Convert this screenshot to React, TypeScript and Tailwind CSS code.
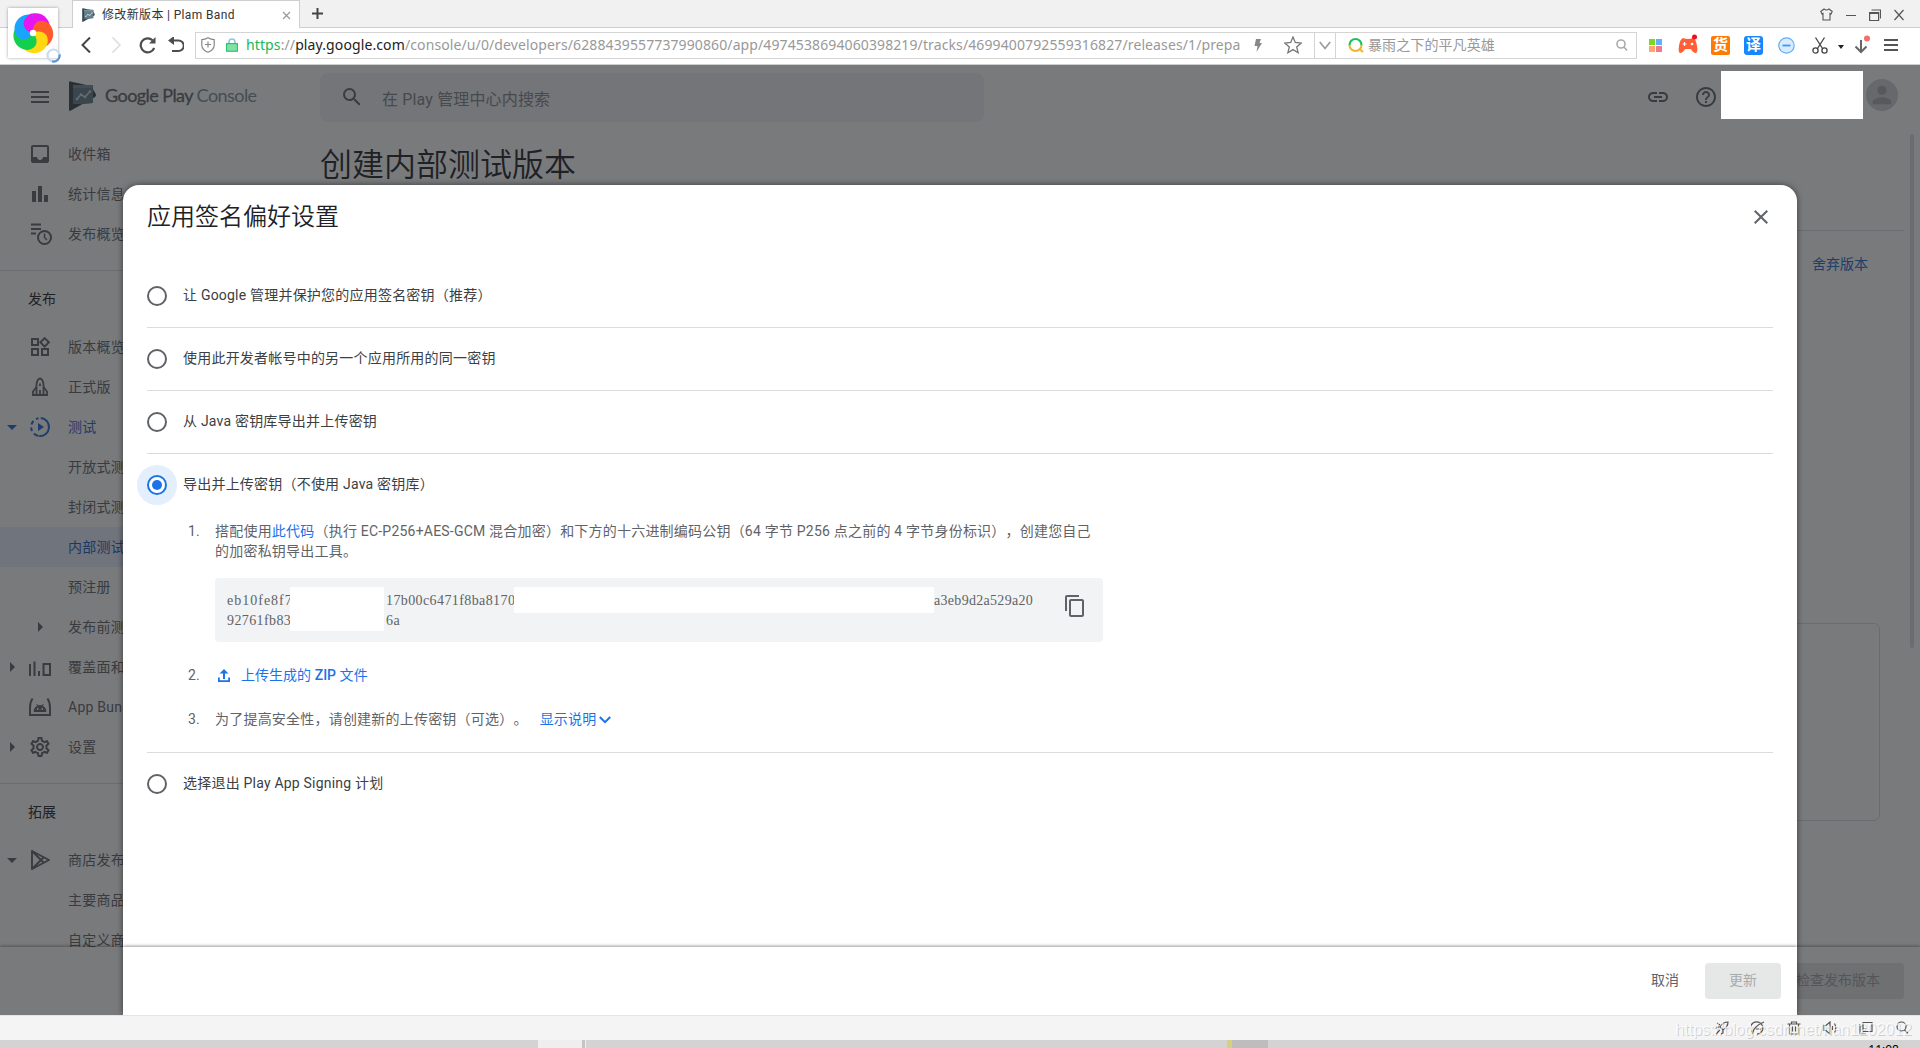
import type { ReactNode } from "react";
import {
  MdMenu,
  MdSearch,
  MdLink,
  MdHelpOutline,
  MdClose,
  MdContentCopy,
  MdArrowDropDown,
  MdArrowRight,
  MdOutlineSettings,
  MdBarChart,
  MdOutlineWidgets,
  MdPerson,
  MdInbox,
} from "react-icons/md";

/* ---------- drawings ---------- */

const petals = ["#e815f0", "#ff5a2a", "#ffd813", "#12cf4e", "#1aa4ff"];

function PinwheelLogo() {
  return (
    <svg className="size-[42px]" viewBox="-21 -21 42 42">
      {petals.map((color, i) => (
        <path
          key={color}
          transform={`rotate(${i * 72})`}
          fill={color}
          d="M0 0C-7-1-12-8-8-14C-4-21 8-22 14-14C17-10 17-7 16-5C13-12 4-12 0 0Z"
        />
      ))}
      <path d="M0 0C-7-1-12-8-8-14C-6-17-4-19-1-19.500L0 0Z" fill={petals[0]} />
      <circle r="3.200" fill="#fff" />
    </svg>
  );
}

function ConsoleMark({ className }: { className: string }) {
  return (
    <svg className={className} viewBox="0 0 27 30">
      <path d="M0 1.500Q0 0 1.500.4L22 5 27 13.500Q27.300 15 26 16L2 29.600Q0 30.500 0 28.500Z" fill="#37474f" />
      <path d="M4 4h20v18l-8 1H4z" fill="#607d8b" />
      <path d="M4 4h20v3H4z" fill="#78909c" />
      <path d="M8 18l4-4.500 4 2.500 5-5.500" fill="none" stroke="#cfd8dc" strokeWidth="1.600" />
      <circle cx="8" cy="18" r="1.300" fill="#cfd8dc" />
      <circle cx="12" cy="13.500" r="1.300" fill="#cfd8dc" />
      <circle cx="16" cy="16" r="1.300" fill="#cfd8dc" />
      <circle cx="21" cy="10.500" r="1.300" fill="#cfd8dc" />
    </svg>
  );
}

type StrokeProps = { className: string; box?: string; width?: number; children: ReactNode };

function Stroke({ className, box = "0 0 24 24", width = 2, children }: StrokeProps) {
  return (
    <svg className={className} viewBox={box} fill="none" stroke="currentColor" strokeWidth={width}>
      {children}
    </svg>
  );
}

const OverviewIcon = () => (
  <Stroke className="size-6">
    <path d="M3 2.500h10M3 7h10M3 11.500h5" />
    <circle cx="16.500" cy="15.500" r="6.500" />
    <path d="M16.500 11.500v4l2.500 2.500" strokeWidth="1.500" />
  </Stroke>
);

const RocketIcon = () => (
  <Stroke className="size-6" width={1.8}>
    <path d="M8.500 20V9.500C8.500 6 10.500 3.500 12 3.500S15.500 6 15.500 9.500V20" />
    <path d="M8.500 12L5 16.500V20H19V16.500L15.500 12" />
    <path d="M12 8.500v2.500M12 15v5" />
  </Stroke>
);

const TestIcon = () => (
  <Stroke className="size-6">
    <path d="M12 3a9 9 0 0 1 0 18" transform="rotate(5 12 12)" />
    <path d="M10.500 21a9 9 0 0 1-4.500-2.500M4 16a9 9 0 0 1-.8-3.500M3.500 9.500A9 9 0 0 1 5.500 6M8 4.200A9 9 0 0 1 10.500 3.200" />
    <path d="M10 8l6 4-6 4z" fill="currentColor" stroke="none" />
  </Stroke>
);

const ReachIcon = () => (
  <Stroke className="size-6">
    <path d="M2 9v12M6.500 6.500V21M11 16v5M15.500 9h6.500v11h-6.500z" />
  </Stroke>
);

const BundleIcon = () => (
  <Stroke className="size-6">
    <path d="M4.500 3.500C2 7 2 10 2 13v7h20v-7c0-3 0-6-2.500-9.500" />
    <path
      d="M6 16.500a6 6 0 0 1 12 0zM8.500 9l1.500 2M15.500 9L14 11"
      fill="currentColor"
      strokeWidth="1"
    />
    <circle cx="9.800" cy="14" r=".9" fill="#fff" stroke="none" />
    <circle cx="14.200" cy="14" r=".9" fill="#fff" stroke="none" />
  </Stroke>
);

const StoreIcon = () => (
  <Stroke className="size-6" width={1.9}>
    <path d="M4 3L21 12 4 21z" strokeLinejoin="round" />
    <path d="M4 3L16 15M4 21L16 9" />
  </Stroke>
);

/* ---------- browser frame ---------- */

function TabStrip() {
  return (
    <div className="flex h-7 items-end border-b border-[#cfcfcf] bg-[#f1f1f1]">
      <div className="mb-[-1px] ml-[72px] flex h-7 w-[228px] items-center border border-b-0 border-[#cfcfcf] bg-white pr-2 pl-[9px]">
        <ConsoleMark className="h-[14px] w-[13px]" />
        <span className="ml-[7px] grow text-[12px] leading-4 tracking-[0.35px] whitespace-nowrap text-[#333]">
          修改新版本 | Plam Band
        </span>
        <Stroke className="mt-[2px] size-[9px] text-[#999]" box="0 0 9 9" width={1.2}>
          <path d="M1 1l7 7M8 1L1 8" />
        </Stroke>
      </div>
      <Stroke className="mb-2 ml-[12px] size-[11px] text-[#444]" box="0 0 11 11" width={2}>
        <path d="M5.500 0v11M0 5.500h11" />
      </Stroke>
      <div className="mb-[6px] ml-auto flex items-center gap-[12px] pr-[15px] text-[#555]">
        <Stroke className="size-[13px]" box="0 0 13 13" width={1.1}>
          <path d="M4 1L.8 3.500 2 6l1-.5V12h7V5.500l1 .5 1.200-2.500L9 1Q6.500 3 4 1z" />
        </Stroke>
        <Stroke className="size-[12px]" box="0 0 12 12" width={1}>
          <path d="M1 6.500h10" />
        </Stroke>
        <Stroke className="size-[12px]" box="0 0 12 12" width={1.2}>
          <path d="M.6 3.500h9v8h-9zM.6 4.500h9M2.500 1h9v8.500" />
        </Stroke>
        <Stroke className="size-[12px]" box="0 0 12 12" width={1.2}>
          <path d="M1.500 1l9 10M10.500 1l-9 10" />
        </Stroke>
      </div>
    </div>
  );
}

function Cell({ className, children }: { className: string; children: ReactNode }) {
  return <div className={`flex shrink-0 items-center justify-center ${className}`}>{children}</div>;
}

function AddressRow() {
  return (
    <div className="flex h-[37px] items-center border-b border-[#cfcfcf] bg-white pb-[2px] pl-[71px]">
      <Cell className="w-[30px] text-[#444]">
        <Stroke className="size-4" box="0 0 16 16" width={2}>
          <path d="M12 .5L4.500 8l7.500 7.500" />
        </Stroke>
      </Cell>
      <Cell className="w-[30px] text-[#ddd]">
        <Stroke className="size-4" box="0 0 16 16" width={1.6}>
          <path d="M4.500 .5L12 8l-7.500 7.500" />
        </Stroke>
      </Cell>
      <Cell className="w-[32px] text-[#4d4d4d]">
        <Stroke className="size-[17px]" box="0 0 17 17" width={2.2}>
          <path d="M13.500 3.200A7 7 0 1 0 15.200 11" />
          <path d="M16.500 0v6.500H10z" fill="currentColor" stroke="none" />
        </Stroke>
      </Cell>
      <Cell className="w-[26px] text-[#4d4d4d]">
        <Stroke className="size-4" box="0 0 16 16" width={2}>
          <path d="M2 3.500h8.500a4.800 4.800 0 0 1 0 10.500H4" />
          <path d="M0 3.500L6 -1v9z" fill="currentColor" stroke="none" />
        </Stroke>
      </Cell>
      <div className="ml-[6px] flex h-[27px] w-[1442px] items-center border border-[#d4d4d4]">
        <Cell className="ml-px w-[22px] text-[#888]">
          <Stroke className="h-4 w-[14px]" box="0 0 14 16" width={1.2}>
            <path d="M7 .8Q4 2.600.8 2.700V8Q1 13 7 15.200 13 13 13.200 8V2.700Q10 2.600 7 .8zM7 4.500v6M4 7.500h6" />
          </Stroke>
        </Cell>
        <Cell className="w-[25px]">
          <svg className="h-[14px] w-3" viewBox="0 0 12 14">
            <path d="M3 6V4a3 3 0 0 1 6 0v2" fill="none" stroke="#8fc7dd" strokeWidth="1.600" />
            <rect x=".6" y="5.600" width="10.800" height="7.600" fill="#7fe3a4" stroke="#2cc56b" strokeWidth="1.200" />
          </svg>
        </Cell>
        <div className="ml-[2px] w-[997px] overflow-hidden font-['Noto_Sans'] text-[14px] leading-6 tracking-[0.11px] whitespace-nowrap text-[#999]">
          <span className="text-[#12b955]">https</span>://<span className="text-[#222]">play.google.com</span>
          <span>
            /console/u/0/developers/6288439557737990860/app/4974538694060398219/tracks/4699400792559316827/releases/1/prepa
          </span>
        </div>
        <Cell className="w-[30px]">
          <svg className="h-[13px] w-2" viewBox="0 0 8 13">
            <path d="M2 0h5L5.500 4H8L2.500 13 3.500 7H.5z" fill="#888" />
          </svg>
        </Cell>
        <Cell className="w-[40px] text-[#777]">
          <Stroke className="size-[18px]" box="0 0 18 18" width={1.3}>
            <path d="M9 1l2.300 5.500 5.900.5-4.500 3.900 1.400 5.800L9 13.600l-5.100 3.100 1.400-5.800L.8 7l5.900-.5z" />
          </Stroke>
        </Cell>
        <Cell className="ml-px h-full w-[22px] border-x border-[#d4d4d4] text-[#999]">
          <Stroke className="h-[9px] w-3" box="0 0 12 9" width={1.6}>
            <path d="M.8 1L6 7.500 11.200 1" />
          </Stroke>
        </Cell>
        <Cell className="ml-[11px] w-[18px]">
          <svg className="size-4" viewBox="0 0 16 16" fill="none" strokeWidth="2.200">
            <path d="M1.500 8a6 6 0 0 1 12 0" stroke="#1fbf5c" />
            <path d="M1.500 8a6 6 0 0 0 12 0" stroke="#f4b52c" />
            <path d="M12 12.500l3 2.500" stroke="#f4b52c" />
          </svg>
        </Cell>
        <span className="ml-[3px] grow text-[14px] leading-5 tracking-[0.1px] text-[#999]">暴雨之下的平凡英雄</span>
        <Cell className="w-[28px] text-[#aaa]">
          <Stroke className="size-3" box="0 0 12 12" width={1.6}>
            <circle cx="5" cy="5" r="4" />
            <path d="M8 8l3 3.500" />
          </Stroke>
        </Cell>
      </div>
      <Cell className="ml-px w-[34px]">
        <svg className="size-[13px]" viewBox="0 0 13 13">
          <path d="M0 0h6v6H0z" fill="#7bd81e" />
          <path d="M7 0h6v6H7z" fill="#5db1ff" />
          <path d="M0 7h6v6H0z" fill="#ffa66e" />
          <path d="M7 7h6v6H7z" fill="#f27988" />
        </svg>
      </Cell>
      <Cell className="w-[32px]">
        <svg className="h-[22px] w-[20px]" viewBox="0 0 20 22">
          <path d="M5 4Q10 6 15 4 18 5 19 12 20 18 18 19 15 19 13 15H7Q5 19 2 19 0 18 1 12 2 5 5 4z" fill="#ff5e36" />
          <path d="M4.500 10h4M6.500 8v4" stroke="#fff" strokeWidth="1.200" />
          <circle cx="14" cy="10" r="1.300" fill="#fff" />
          <circle cx="16.500" cy="3" r="2.500" fill="#f0101c" />
        </svg>
      </Cell>
      <Cell className="w-[33px]">
        <span className="flex size-[19px] items-center justify-center rounded-[2px] bg-[#ff7a05] text-[15px] leading-none font-bold text-white">
          货
        </span>
      </Cell>
      <Cell className="w-[33px]">
        <span className="flex size-[19px] items-center justify-center rounded-[3px] bg-[#1787fb] text-[15px] leading-none font-bold text-white">
          译
        </span>
      </Cell>
      <Cell className="w-[33px]">
        <svg className="size-[17px]" viewBox="0 0 17 17">
          <circle cx="8.500" cy="8.500" r="7.700" fill="#d8ecff" stroke="#62aff8" strokeWidth="1.200" />
          <path d="M4.500 8.500h8" stroke="#4196f0" strokeWidth="1.800" />
        </svg>
      </Cell>
      <Cell className="w-[33px] text-[#444]">
        <Stroke className="h-[17px] w-4" box="0 0 16 17" width={1.3}>
          <path d="M3.500.5l7 11M12.500.5l-7 11" />
          <circle cx="3.500" cy="13.500" r="2.600" />
          <circle cx="12.500" cy="13.500" r="2.600" />
        </Stroke>
      </Cell>
      <Cell className="w-[9px]">
        <svg className="mt-1 h-[4px] w-[6px]" viewBox="0 0 6 4">
          <path d="M0 0h6L3 4z" fill="#222" />
        </svg>
      </Cell>
      <Cell className="w-[33px]">
        <svg className="h-5 w-4" viewBox="0 0 16 20" fill="none">
          <path d="M7 5v12M1.500 11.500L7 17l5.500-5.500" stroke="#666" strokeWidth="2" />
          <circle cx="13" cy="3.500" r="3" fill="#f2706c" />
        </svg>
      </Cell>
      <Cell className="w-[26px] text-[#555]">
        <Stroke className="size-[14px]" box="0 0 14 14" width={2}>
          <path d="M0 2h14M0 7h14M0 12h14" />
        </Stroke>
      </Cell>
    </div>
  );
}

function HomeButton() {
  return (
    <div className="absolute top-2 left-2 z-10 flex size-[50px] items-center justify-center bg-white shadow-[0_0_3px_rgba(0,0,0,0.35)]">
      <PinwheelLogo />
      <svg className="absolute -right-[3px] -bottom-[5px] size-[15px]" viewBox="0 0 15 15" fill="none" strokeWidth="2.200">
        <circle cx="7.500" cy="7.500" r="6" stroke="#c9dcf2" />
        <path d="M13.500 6.500A6 6 0 0 1 6 13.300" stroke="#5b93da" />
      </svg>
    </div>
  );
}

/* ---------- console page ---------- */

type NavItem = {
  label: string;
  icon?: ReactNode;
  caret?: "down" | "right" | "inner";
  tone?: "active" | "open";
};

const navGroups: { title?: string; items: NavItem[] }[] = [
  {
    items: [
      { label: "收件箱", icon: <MdInbox className="size-6" /> },
      { label: "统计信息", icon: <MdBarChart className="size-6" /> },
      { label: "发布概览", icon: <OverviewIcon /> },
    ],
  },
  {
    title: "发布",
    items: [
      { label: "版本概览", icon: <MdOutlineWidgets className="size-6" /> },
      { label: "正式版", icon: <RocketIcon /> },
      { label: "测试", icon: <TestIcon />, caret: "down", tone: "open" },
      { label: "开放式测试" },
      { label: "封闭式测试" },
      { label: "内部测试", tone: "active" },
      { label: "预注册" },
      { label: "发布前测试报告", caret: "inner" },
      { label: "覆盖面和设备", icon: <ReachIcon />, caret: "right" },
      { label: "App Bundle 探索器", icon: <BundleIcon /> },
      { label: "设置", icon: <MdOutlineSettings className="size-6" />, caret: "right" },
    ],
  },
  {
    title: "拓展",
    items: [
      { label: "商店发布", icon: <StoreIcon />, caret: "down" },
      { label: "主要商品详情" },
      { label: "自定义商品详情" },
    ],
  },
];

function NavRow({ label, icon, caret, tone }: NavItem) {
  const color =
    tone === "active"
      ? "bg-[#e8f0fe] text-[#185abc]"
      : tone === "open"
        ? "text-[#1967d2]"
        : "text-[#5f6368]";
  return (
    <div className={`flex h-10 items-center text-[14px] leading-5 ${color}`}>
      <span className="flex w-6 shrink-0 justify-center">
        {caret === "down" && <MdArrowDropDown className="size-6 shrink-0" />}
        {caret === "right" && <MdArrowRight className="size-6 shrink-0" />}
      </span>
      <span className="ml-1 flex w-6 shrink-0 justify-center">
        {caret === "inner" ? <MdArrowRight className="size-6" /> : icon}
      </span>
      <span className="ml-4 tracking-[0.25px] whitespace-nowrap">{label}</span>
    </div>
  );
}

function Sidebar() {
  return (
    <nav className="w-[256px] shrink-0 overflow-hidden pt-[6px]">
      {navGroups.map((group, i) => (
        <div key={i} className={i > 0 ? "mt-4 border-t border-[#dadce0] pt-2" : ""}>
          {group.title && (
            <div className="mb-2 flex h-10 items-center pl-7 text-[14px] text-[#202124]">{group.title}</div>
          )}
          {group.items.map((item) => (
            <NavRow key={item.label} {...item} />
          ))}
        </div>
      ))}
    </nav>
  );
}

function TopBar() {
  return (
    <header className="flex h-16 items-center text-[#5f6368]">
      <MdMenu className="ml-7 size-6 shrink-0" />
      <div className="mb-px ml-[17px] flex w-[251px] items-center">
        <ConsoleMark className="h-[30px] w-[27px]" />
        <span className="mb-[2px] ml-[9px] font-['Lato'] text-[18px] leading-6 tracking-[-0.56px] whitespace-nowrap">
          <span className="text-[#5f6368] [-webkit-text-stroke:0.3px]">Google Play</span>
          <span className="text-[#78909c]"> Console</span>
        </span>
      </div>
      <div className="mt-px flex h-[49px] w-[664px] items-center rounded-lg bg-[#f1f3f4]">
        <MdSearch className="mb-px ml-5 size-6" />
        <span className="mt-[6px] ml-[18px] text-[16px] leading-6 tracking-[0.15px] text-[#80868b]">
          在 Play 管理中心内搜索
        </span>
      </div>
      <MdLink className="ml-[662px] size-6" />
      <MdHelpOutline className="ml-6 size-6" />
      <div className="mb-1 ml-[148px] flex size-8 items-center justify-center rounded-full bg-[#d0d2d6]">
        <MdPerson className="size-7 text-[#a9adb2]" />
      </div>
    </header>
  );
}

function ReleasePage() {
  return (
    <div className="flex h-full flex-col bg-white">
      <TopBar />
      <div className="flex min-h-0 grow overflow-hidden">
        <Sidebar />
        <main className="flex grow flex-col pr-4 pl-16">
          <h1 className="pt-[17px] text-[32px] leading-10 font-[350] text-[#202124]">创建内部测试版本</h1>
          <div className="mt-[45px] border-t border-[#dadce0]" />
          <a className="mt-[23px] mr-9 self-end text-[14px] leading-5 text-[#1967d2]">舍弃版本</a>
          <div className="mt-[349px] mr-6 h-[198px] shrink-0 rounded-md border border-[#dadce0]" />
        </main>
        <div className="mt-[6px] mr-[6px] ml-[-10px] h-[514px] w-1 rounded-full bg-[#dadce0]" />
      </div>
      <footer className="flex h-[68px] shrink-0 items-center justify-end bg-white pr-4 shadow-[0_-1px_3px_rgba(0,0,0,0.4)]">
        <span className="flex h-9 items-center rounded bg-[#e4e6e7] px-6 pb-px text-[14px] text-[#a0a4a8]">
          检查发布版本
        </span>
      </footer>
    </div>
  );
}

/* ---------- signing dialog ---------- */

function OptionRow({ label, selected }: { label: string; selected?: boolean }) {
  return (
    <div className="box-content flex h-[62px] items-center">
      {selected ? (
        <span className="-m-[10px] flex size-10 shrink-0 items-center justify-center rounded-full bg-[#e3effc]">
          <span className="flex size-5 items-center justify-center rounded-full border-2 border-[#1a73e8] bg-white">
            <span className="size-[10px] rounded-full bg-[#1a73e8]" />
          </span>
        </span>
      ) : (
        <span className="size-5 shrink-0 rounded-full border-2 border-[#5f6368]" />
      )}
      <span className="relative mb-[2px] ml-4 text-[14px] leading-5 tracking-[0.21px] text-[#3c4043]">{label}</span>
    </div>
  );
}

function KeyBlock() {
  return (
    <div className="relative mt-[17px] h-16 w-[888px] rounded bg-[#f1f3f4] pt-[13px] pl-3 font-['Liberation_Serif'] text-[14px] leading-5 text-[#5f6368]">
      <div className="flex">
        <span className="w-[159px] tracking-[1px]">eb10fe8f7</span>
        <span className="w-[548px] tracking-[0.4px]">17b00c6471f8ba8170</span>
        <span className="tracking-[0.3px]">a3eb9d2a529a20</span>
      </div>
      <div className="flex">
        <span className="w-[159px] tracking-[0.4px]">92761fb83</span>
        <span className="tracking-[0.4px]">6a</span>
      </div>
      <div className="absolute top-[9px] left-[75px] h-11 w-[94px] bg-white" />
      <div className="absolute top-[9px] left-[299px] h-[26px] w-[420px] bg-white" />
      <MdContentCopy className="absolute top-4 right-4 size-6 text-[#5f6368]" />
    </div>
  );
}

function UploadSteps() {
  return (
    <div className="flex h-[236px] flex-col pl-[41px] text-[14px] leading-5 tracking-[0.21px] text-[#5f6368] [text-spacing-trim:space-all]">
      <div className="mt-[5px] flex">
        <span className="w-[27px] shrink-0">1.</span>
        <div className="w-[888px]">
          <p className="whitespace-nowrap">
            搭配使用<span className="text-[#1a73e8]">此代码</span>（执行 EC-P256+AES-GCM
            混合加密）和下方的十六进制编码公钥（64 字节 P256 点之前的 4 字节身份标识），创建您自己
            <br />
            的加密私钥导出工具。
          </p>
          <KeyBlock />
        </div>
      </div>
      <div className="mt-[23px] flex items-center">
        <span className="w-[27px]">2.</span>
        <svg className="size-[18px] text-[#1a73e8]" viewBox="0 0 18 18" fill="currentColor">
          <path d="M9 3l4.500 4.500H10V13H8V7.500H4.500z" />
          <path d="M3 11.500h1.800V14.200h8.400v-2.700H15V16H3z" />
        </svg>
        <span className="ml-2 tracking-[0.03px] text-[#1a73e8]">
          上传生成的 <span className="font-medium">ZIP</span> 文件
        </span>
      </div>
      <div className="mt-6 flex items-center">
        <span className="w-[27px]">3.</span>
        <span>为了提高安全性，请创建新的上传密钥（可选）。</span>
        <span className="ml-3 text-[#1a73e8]">显示说明</span>
        <Stroke className="mt-[2px] ml-[3px] h-2 w-3 text-[#1a73e8]" box="0 0 12 8" width={2}>
          <path d="M.8 1L6 6.200 11.200 1" />
        </Stroke>
      </div>
    </div>
  );
}

function SigningDialog() {
  return (
    <div className="flex h-[830px] w-[1674px] flex-col overflow-hidden rounded-t-2xl bg-white shadow-[0_0_6px_rgba(0,0,0,0.5)]">
      <div className="flex h-16 items-center justify-between pr-6 pl-6">
        <h2 className="text-[24px] leading-8 font-[350] text-[#202124]">应用签名偏好设置</h2>
        <MdClose className="size-6 text-[#5f6368]" />
      </div>
      <div className="mx-6 mt-4 flex grow flex-col divide-y divide-[#dadce0]">
        <OptionRow label="让 Google 管理并保护您的应用签名密钥（推荐）" />
        <OptionRow label="使用此开发者帐号中的另一个应用所用的同一密钥" />
        <OptionRow label="从 Java 密钥库导出并上传密钥" />
        <div>
          <OptionRow label="导出并上传密钥（不使用 Java 密钥库）" selected />
          <UploadSteps />
        </div>
        <OptionRow label="选择退出 Play App Signing 计划" />
      </div>
      <div className="flex h-[68px] shrink-0 items-center justify-end pr-4 text-[14px] shadow-[0_-1px_3px_rgba(0,0,0,0.4)]">
        <span className="mr-[26px] mb-[2px] text-[#5f6368]">取消</span>
        <span className="flex h-9 w-[76px] items-center justify-center rounded bg-[#e6e8e7] pb-[2px] text-[#a9abad]">
          更新
        </span>
      </div>
    </div>
  );
}

/* ---------- bottom bars ---------- */

function StatusBar() {
  return (
    <div className="relative flex h-[25px] items-center justify-end gap-[22px] border-t border-[#e4e4e4] bg-[#f4f4f4] pr-[11px] text-[#555]">
      <Stroke className="size-[14px]" box="0 0 14 14" width={1.2}>
        <path d="M13 1Q8 1 5 6l3 3Q13 6 13 1zM5 6H2L1 8M8 9v3l-2 1M1 13l4-4M2 2l3 2" />
      </Stroke>
      <Stroke className="size-[14px]" box="0 0 14 14" width={1.2}>
        <path d="M2 12A6.200 6.200 0 1 1 6 13.200M1 13Q3 5 13 1M5 8h5" />
      </Stroke>
      <Stroke className="size-[14px]" box="0 0 14 14" width={1.2}>
        <path d="M.5 3h13M4.500 3V1h5v2M2.500 3v10h9V3M5.500 5.500v5M8.500 5.500v5" />
      </Stroke>
      <Stroke className="size-[14px]" box="0 0 14 14" width={1.2}>
        <path d="M1 4.500h2L7 1v12L3 9.500H1zM9.500 5v4M11.500 2.500q2.500 4.500 0 9" />
      </Stroke>
      <Stroke className="size-[14px]" box="0 0 14 14" width={1.2}>
        <path d="M4 1.500h9v9H4zM1 3v10h6M7 7.500h-3" />
      </Stroke>
      <Stroke className="size-[14px]" box="0 0 14 14" width={1.2}>
        <circle cx="6.500" cy="5.500" r="4.500" />
        <path d="M9.500 9l3.500 3.500" />
      </Stroke>
      <span className="absolute top-[2px] right-2 font-['Liberation_Sans'] text-[16px] leading-6 whitespace-nowrap text-white/70 [text-shadow:1px_1px_0_rgba(0,0,0,0.16)]">
        https://blog.csdn.net/han1202012
      </span>
    </div>
  );
}

function Taskbar() {
  return (
    <div className="flex h-2 overflow-hidden bg-[#d3d3d3]">
      <div className="ml-[538px] w-[44px] bg-[#eeeeee]" />
      <div className="w-[4px] border-r border-[#eeeeee] bg-[#c4c4c4]" />
      <div className="ml-[641px] w-[5px] bg-[#d6cf7c]" />
      <div className="w-9 bg-[#bdbdbd]" />
      <span className="mt-[3px] ml-auto pr-[21px] font-['Noto_Sans'] text-[12px] leading-[14px] text-black">11:08</span>
    </div>
  );
}

export default function App() {
  return (
    <div className="relative flex h-[1048px] w-[1920px] flex-col overflow-hidden bg-white font-[Roboto,'Noto_Sans_CJK_SC',sans-serif]">
      <HomeButton />
      <TabStrip />
      <AddressRow />
      <div className="relative h-[950px] overflow-hidden">
        <ReleasePage />
        <div className="absolute inset-0 flex items-end justify-center bg-[#202124]/60">
          <SigningDialog />
        </div>
        <div className="absolute top-[6px] right-[57px] h-12 w-[142px] bg-white" />
      </div>
      <StatusBar />
      <Taskbar />
    </div>
  );
}
